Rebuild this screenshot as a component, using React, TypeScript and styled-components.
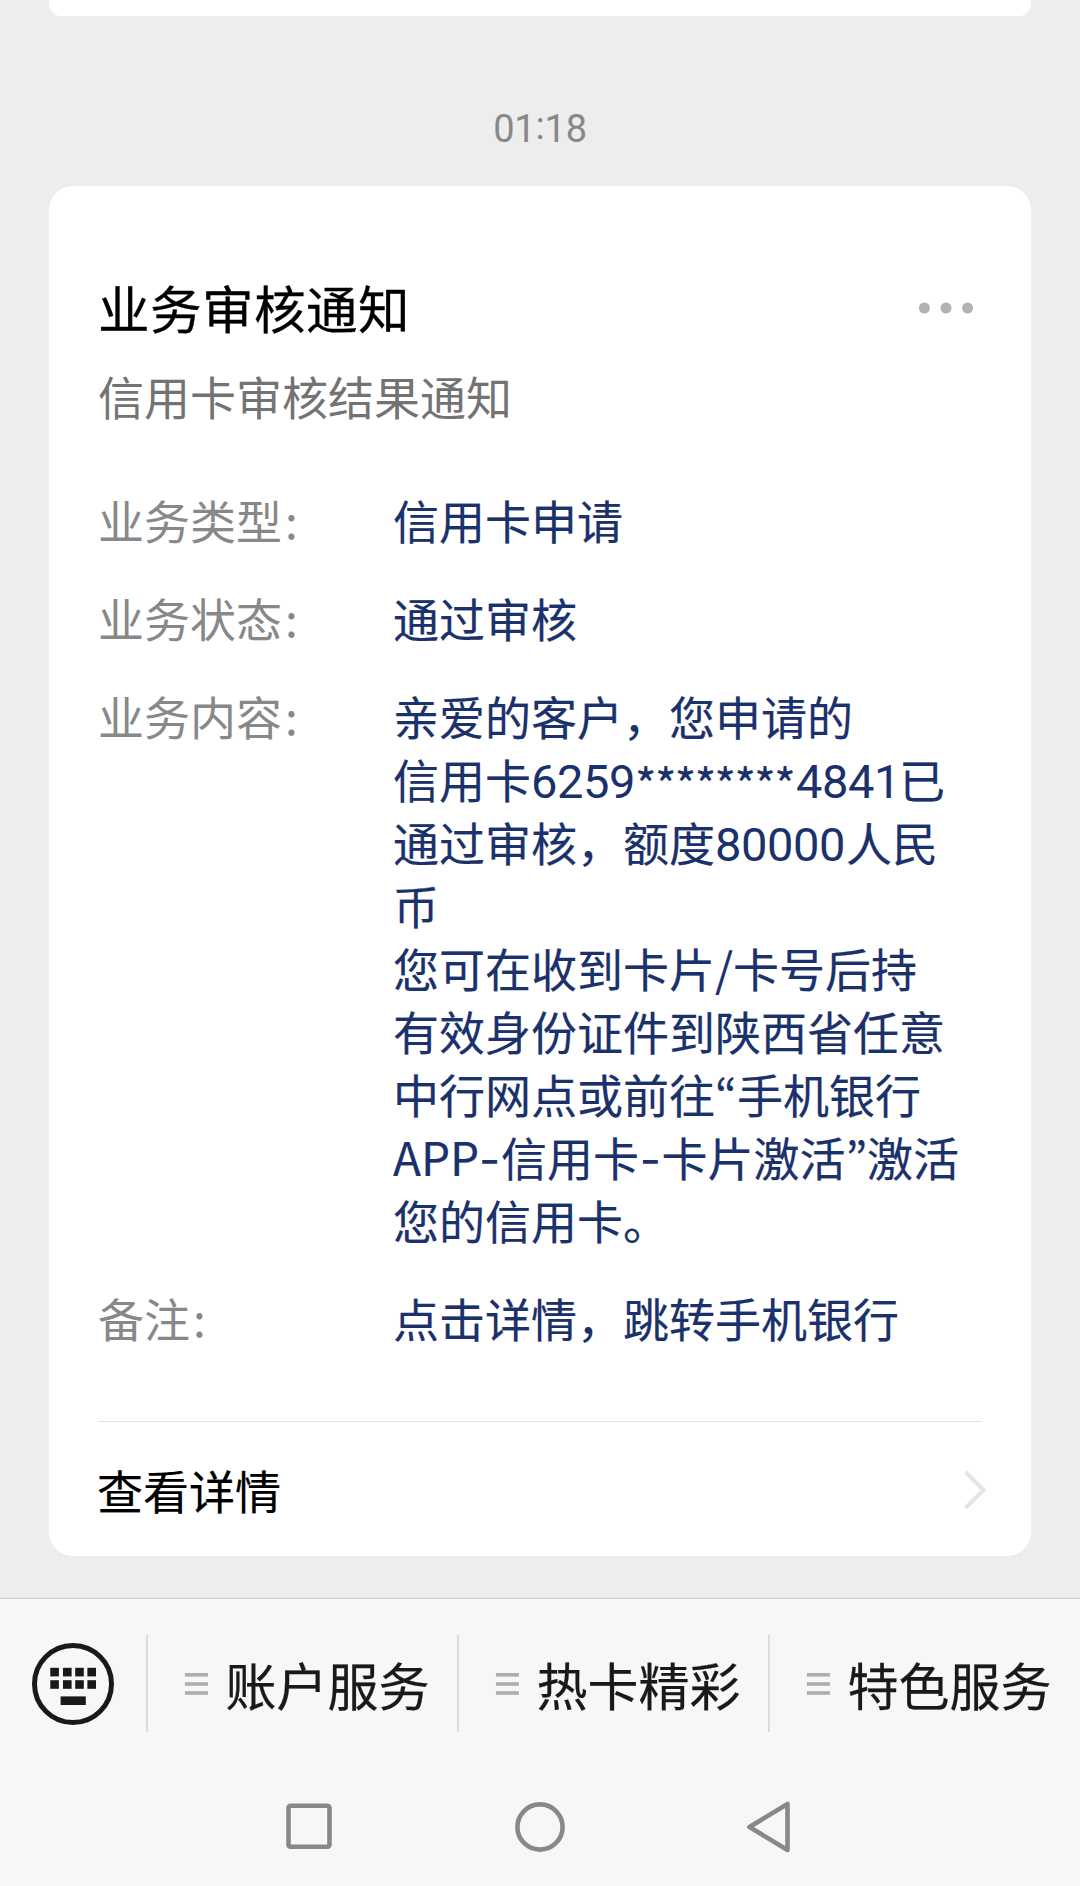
import React from "react";
import styled, { createGlobalStyle } from "styled-components";

const GlobalStyle = createGlobalStyle`
  * { box-sizing: border-box; }
  body {
    margin: 0;
    background: #ededed;
    font-family: "Noto Sans CJK SC", "Noto Sans", sans-serif;
  }
`;

const Screen = styled.div`
  width: 1080px;
  height: 1886px;
  display: flex;
  flex-direction: column;
  background: #ededed;
  overflow: hidden;
  white-space: nowrap;
`;

const Chat = styled.main`
  flex: 1;
  display: flex;
  flex-direction: column;
  padding: 0 49px;
`;

const PreviousCard = styled.div`
  height: 16px;
  background: #fff;
  border-radius: 0 0 12px 12px;
`;

const Timestamp = styled.time`
  height: 170px;
  padding-top: 86px;
  line-height: 54px;
  text-align: center;
  font-family: Roboto, sans-serif;
  font-size: 38px;
  letter-spacing: -0.2px;
  color: #888;
`;

const TimeColon = styled.span`
  vertical-align: 3px;
  line-height: 1;
`;

const Card = styled.article`
  height: 1370px;
  display: flex;
  flex-direction: column;
  padding: 0 49px;
  background: #fff;
  border-radius: 24px;
`;

const CardHeader = styled.header`
  display: flex;
  justify-content: space-between;
  padding-top: 85px;
`;

const Title = styled.h1`
  margin: 0;
  font-size: 51.6px;
  line-height: 72px;
  font-weight: 400;
  letter-spacing: 0.4px;
  color: #000;
  -webkit-text-stroke: 0.3px #000;
`;

const MoreIcon = styled.svg`
  width: 64px;
  height: 16px;
  margin: 29px 0 0;
`;

const Subtitle = styled.p`
  margin: 21px 0 0;
  font-size: 46px;
  line-height: 63px;
  color: #737373;
`;

const Fields = styled.dl`
  margin: 61px 0 0;
  display: grid;
  grid-template-columns: 295px 1fr;
  row-gap: 35px;
  font-size: 46px;
  line-height: 63px;
`;

const Label = styled.dt`
  color: #888;
`;

const Colon = styled.span`
  margin-left: 3px;
`;

const Value = styled.dd`
  margin: 0;
  color: #1a316b;
  -webkit-text-stroke: 0.2px #1a316b;
`;

const Line = styled.div`
  height: 63px;
`;

const Run = styled.span<{ $width: number }>`
  display: inline-block;
  width: ${(p) => p.$width}px;
  line-height: 1;
`;

const Mask = styled(Run)`
  letter-spacing: -1.6px;
  line-height: 36px;
  vertical-align: -5px;
`;

const Digits = styled(Run)`
  font-family: Roboto, sans-serif;
  font-size: 47px;
  letter-spacing: -0.4px;
  -webkit-text-stroke: 0;
`;

const Quote = styled(Run)`
  font-family: "Noto Sans CJK KR", sans-serif;
  text-align: center;
`;

const Hyphen = styled(Run)`
  font-family: Inter, sans-serif;
  text-align: center;
`;

const CardFooter = styled.footer`
  margin-top: auto;
  height: 135px;
  border-top: 1px solid #e3e3e3;
  display: flex;
  align-items: center;
  justify-content: space-between;
  font-size: 46px;
  line-height: 63px;
  color: #000;
`;

const FooterText = styled.span`
  margin-left: -1px;
  -webkit-text-stroke: 0.2px #000;
`;

const Chevron = styled.svg`
  width: 24px;
  height: 44px;
  margin: 1px -4px 0 0;
`;

const Toolbar = styled.nav`
  height: 169px;
  margin-top: 42px;
  border-top: 1px solid #c9c9c9;
  background: #f7f7f7;
  display: flex;
  align-items: center;
`;

const KeyboardButton = styled.div`
  width: 146px;
  display: flex;
  padding: 2px 0 0 32px;
`;

const MenuItem = styled.div`
  width: 311px;
  height: 97px;
  border-left: 2px solid #dcdcdc;
  display: flex;
  align-items: center;
  padding-left: 36px;
  gap: 17.5px;
  font-size: 51px;
  line-height: 72px;
  color: #191919;

  svg {
    margin-top: 1px;
  }
`;

const MenuText = styled.span`
  margin-top: 2px;
  -webkit-text-stroke: 0.25px #191919;
`;

const SystemBar = styled.div`
  height: 119px;
  background: #f7f7f7;
  display: flex;
  justify-content: space-between;
  padding: 32px 285px 0;
`;

const NavIcon = styled.svg`
  width: 50px;
  height: 56px;
  fill: none;
  stroke: #888;
  stroke-width: 4.6;
`;

const MenuLines = () => (
  <svg width="24" height="24" viewBox="0 0 24 24" fill="#adadad">
    <rect x="0.9" y="1" width="23" height="3.6" />
    <rect x="0.9" y="10.2" width="23" height="3.6" />
    <rect x="0.9" y="19.2" width="23" height="3.6" />
  </svg>
);

const KeyboardIcon = () => (
  <svg width="82" height="82" viewBox="0 0 82 82" fill="#191919">
    <circle cx="41" cy="41" r="38.5" fill="none" stroke="#191919" strokeWidth="5" />
    {[18.3, 31, 43.2, 55.4].map((x) => (
      <React.Fragment key={x}>
        <rect x={x} y="24.8" width="8.6" height="8.6" />
        <rect x={x} y="37.2" width="8.6" height="8.6" />
      </React.Fragment>
    ))}
    <rect x="28.6" y="53.4" width="25.2" height="8.6" />
  </svg>
);

const FieldLabel = ({ text }: { text: string }) => (
  <Label>
    {text}
    <Colon>:</Colon>
  </Label>
);

const menus = ["账户服务", "热卡精彩", "特色服务"];

export default function App() {
  return (
    <Screen>
      <GlobalStyle />
      <Chat>
        <PreviousCard />
        <Timestamp>
          01<TimeColon>:</TimeColon>18
        </Timestamp>
        <Card>
          <CardHeader>
            <Title>业务审核通知</Title>
            <MoreIcon viewBox="0 0 64 16" fill="#b2b2b2">
              <circle cx="6.4" cy="8" r="5.5" />
              <circle cx="28" cy="8" r="5.5" />
              <circle cx="49.6" cy="8" r="5.5" />
            </MoreIcon>
          </CardHeader>
          <Subtitle>信用卡审核结果通知</Subtitle>
          <Fields>
            <FieldLabel text="业务类型" />
            <Value>信用卡申请</Value>
            <FieldLabel text="业务状态" />
            <Value>通过审核</Value>
            <FieldLabel text="业务内容" />
            <Value>
              <Line>亲爱的客户，您申请的</Line>
              <Line>
                信用卡<Digits $width={104}>6259</Digits>
                <Mask $width={161}>********</Mask>
                <Digits $width={103}>4841</Digits>已
              </Line>
              <Line>
                通过审核，额度<Digits $width={131}>80000</Digits>人民
              </Line>
              <Line>币</Line>
              <Line>
                您可在收到卡片<Run $width={18}>/</Run>卡号后持
              </Line>
              <Line>有效身份证件到陕西省任意</Line>
              <Line>
                中行网点或前往<Quote $width={22}>“</Quote>手机银行
              </Line>
              <Line>
                <Run $width={85}>APP</Run>
                <Hyphen $width={23}>-</Hyphen>信用卡<Hyphen $width={22.5}>-</Hyphen>卡片激活
                <Quote $width={21.5}>”</Quote>激活
              </Line>
              <Line>您的信用卡。</Line>
            </Value>
            <FieldLabel text="备注" />
            <Value>点击详情，跳转手机银行</Value>
          </Fields>
          <CardFooter>
            <FooterText>查看详情</FooterText>
            <Chevron viewBox="0 0 24 44" fill="none" stroke="#e5e5e5" strokeWidth="4.4">
              <path d="M3.5 4 L21.5 22 L3.5 40" />
            </Chevron>
          </CardFooter>
        </Card>
      </Chat>
      <Toolbar>
        <KeyboardButton>
          <KeyboardIcon />
        </KeyboardButton>
        {menus.map((name) => (
          <MenuItem key={name}>
            <MenuLines />
            <MenuText>{name}</MenuText>
          </MenuItem>
        ))}
      </Toolbar>
      <SystemBar>
        <NavIcon viewBox="0 0 50 56">
          <rect x="3.5" y="6.8" width="41" height="41" rx="2" />
        </NavIcon>
        <NavIcon viewBox="0 0 50 56">
          <circle cx="25" cy="28" r="22.6" />
        </NavIcon>
        <NavIcon viewBox="0 0 50 56" strokeLinejoin="round">
          <path d="M4.5 28 L42.5 5 V51 Z" />
        </NavIcon>
      </SystemBar>
    </Screen>
  );
}
